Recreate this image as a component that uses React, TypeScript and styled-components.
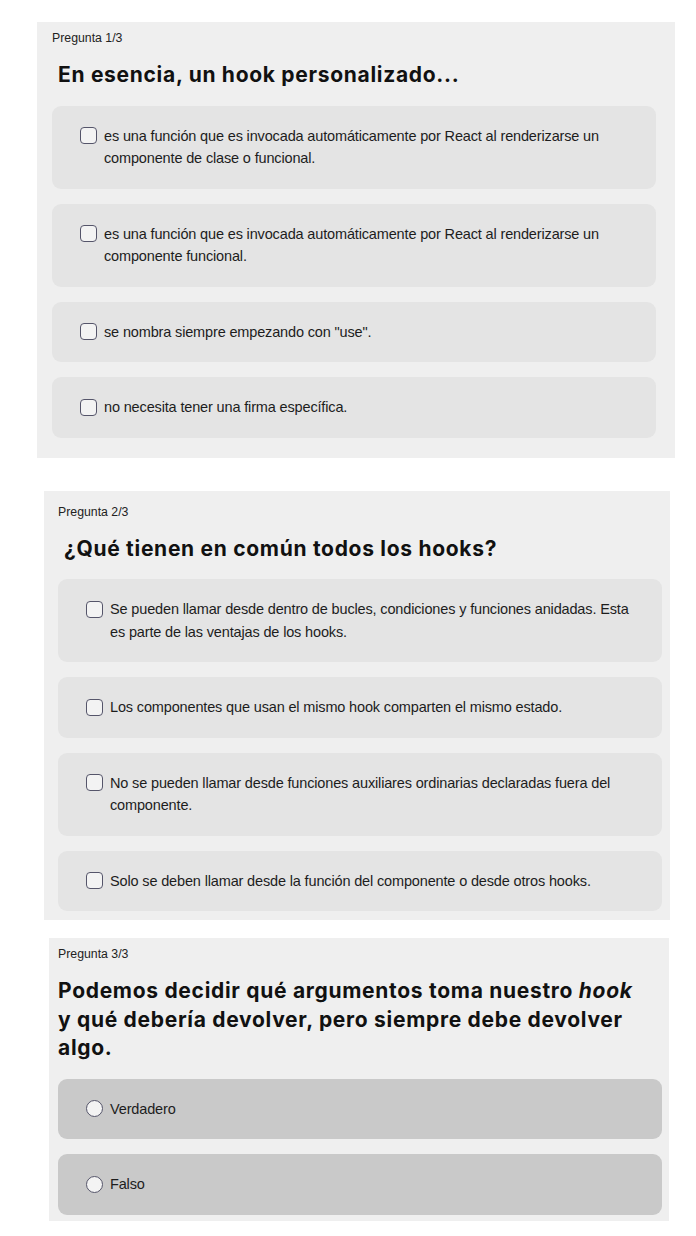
import React from "react";
import styled, { createGlobalStyle } from "styled-components";

const Global = createGlobalStyle`
  html, body { margin: 0; padding: 0; background: #ffffff; }
  body { font-family: "Liberation Sans", Arial, sans-serif; color: #1a1a1a; }
`;

const Page = styled.div`
  display: flex;
  flex-direction: column;
  padding-top: 22px;
  width: 696px;
`;

type PanelProps = {
  $left: number;
  $width: number;
  $pt: number;
  $pr: number;
  $pb: number;
  $pl: number;
  $mb: number;
};

const Panel = styled.section<PanelProps>`
  display: flex;
  flex-direction: column;
  margin-left: ${(p) => p.$left}px;
  margin-bottom: ${(p) => p.$mb}px;
  width: ${(p) => p.$width}px;
  box-sizing: border-box;
  padding: ${(p) => `${p.$pt}px ${p.$pr}px ${p.$pb}px ${p.$pl}px`};
  background: #efefef;
`;

const Label = styled.div`
  font-family: "Liberation Sans", Arial, sans-serif;
  font-size: 12.3px;
  line-height: 14px;
  color: #222;
`;

const Heading = styled.h2<{ $indent: number; $max: number }>`
  margin: 16px 0 16px ${(p) => p.$indent}px;
  max-width: ${(p) => p.$max}px;
  font-family: Inter, "Noto Sans", sans-serif;
  font-weight: 700;
  font-size: 21px;
  line-height: 28.5px;
  color: #111;
  letter-spacing: 0.7px;
  em { font-style: italic; }
`;

const Options = styled.div`
  display: flex;
  flex-direction: column;
  gap: 15px;
`;

const Option = styled.label<{ $dark?: boolean }>`
  display: flex;
  align-items: flex-start;
  gap: 7px;
  padding: 19px 28px;
  border-radius: 9px;
  background: ${(p) => (p.$dark ? "#c9c9c9" : "#e4e4e4")};
  font-family: "Liberation Sans", Arial, sans-serif;
  font-size: 14.5px;
  line-height: 22.5px;
  color: #1d1d1d;
  letter-spacing: -0.15px;
`;

const Box = styled.span<{ $round?: boolean }>`
  flex: none;
  width: 17px;
  height: 17px;
  margin-top: 2.5px;
  box-sizing: border-box;
  border: 1.2px solid #55556a;
  border-radius: ${(p) => (p.$round ? "50%" : "4px")};
  background: #f3f3f3;
`;

const Text = styled.span`
  flex: 1;
`;

type Q = {
  label: string;
  title: React.ReactNode;
  options: string[];
  radio?: boolean;
  panel: PanelProps;
  indent: number;
  max: number;
};

const questions: Q[] = [
  {
    label: "Pregunta 1/3",
    title: "En esencia, un hook personalizado...",
    options: [
      "es una función que es invocada automáticamente por React al renderizarse un componente de clase o funcional.",
      "es una función que es invocada automáticamente por React al renderizarse un componente funcional.",
      'se nombra siempre empezando con "use".',
      "no necesita tener una firma específica.",
    ],
    panel: { $left: 37, $width: 638, $pt: 9, $pr: 19, $pb: 20, $pl: 15, $mb: 33 },
    indent: 6,
    max: 600,
  },
  {
    label: "Pregunta 2/3",
    title: "¿Qué tienen en común todos los hooks?",
    options: [
      "Se pueden llamar desde dentro de bucles, condiciones y funciones anidadas. Esta es parte de las ventajas de los hooks.",
      "Los componentes que usan el mismo hook comparten el mismo estado.",
      "No se pueden llamar desde funciones auxiliares ordinarias declaradas fuera del componente.",
      "Solo se deben llamar desde la función del componente o desde otros hooks.",
    ],
    panel: { $left: 44, $width: 626, $pt: 14, $pr: 8, $pb: 9, $pl: 14, $mb: 18 },
    indent: 6,
    max: 600,
  },
  {
    label: "Pregunta 3/3",
    title: (
      <>
        Podemos decidir qué argumentos toma nuestro <em>hook</em> y qué debería
        devolver, pero siempre debe devolver algo.
      </>
    ),
    options: ["Verdadero", "Falso"],
    radio: true,
    panel: { $left: 49, $width: 620, $pt: 9, $pr: 7, $pb: 6, $pl: 9, $mb: 0 },
    indent: 0,
    max: 585,
  },
];

export default function App() {
  return (
    <>
      <Global />
      <Page>
        {questions.map((q) => (
          <Panel key={q.label} {...q.panel}>
            <Label>{q.label}</Label>
            <Heading $indent={q.indent} $max={q.max}>
              {q.title}
            </Heading>
            <Options>
              {q.options.map((o) => (
                <Option key={o} $dark={q.radio}>
                  <Box $round={q.radio} />
                  <Text>{o}</Text>
                </Option>
              ))}
            </Options>
          </Panel>
        ))}
      </Page>
    </>
  );
}
